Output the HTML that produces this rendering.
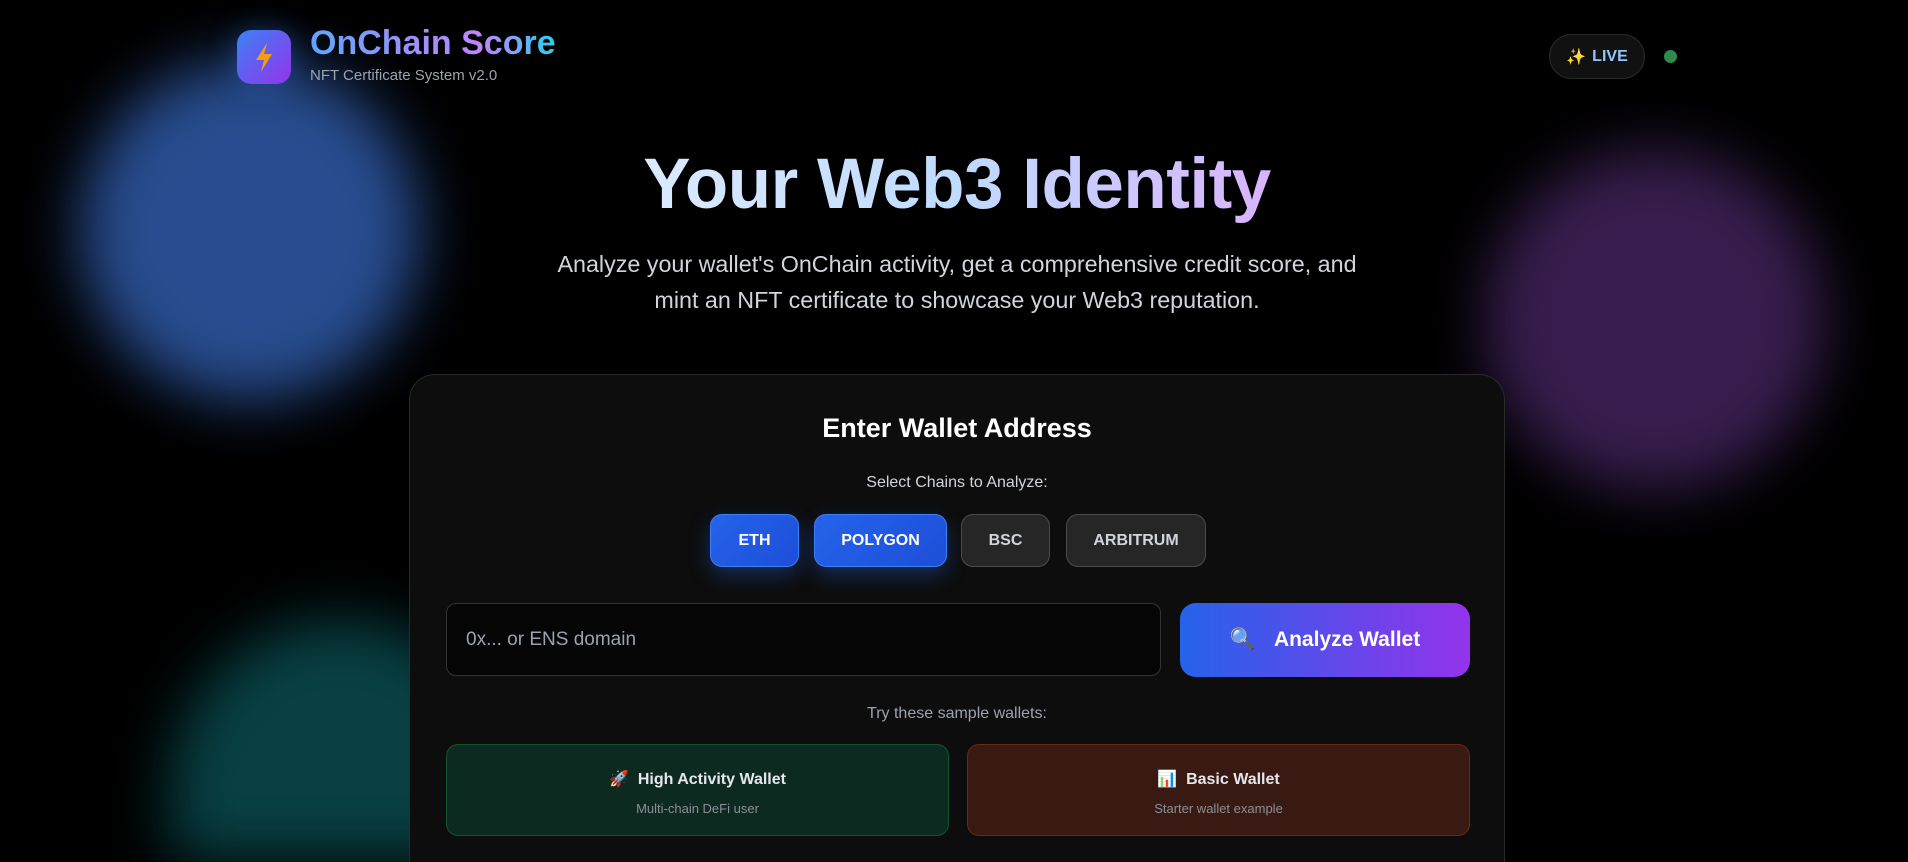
<!DOCTYPE html>
<html style="width:1908px;height:862px;overflow:hidden"><head><meta charset="utf-8"><style>
*{box-sizing:border-box;margin:0;padding:0}
body{width:1908px;height:862px;background:#000;overflow:hidden;position:relative;font-family:"Liberation Sans","Noto Sans CJK SC",sans-serif;color:#fff}
.blob{position:absolute;border-radius:50%;filter:blur(30px)}
.logo{position:absolute;left:237px;top:30px;width:54px;height:54px;border-radius:14px;background:linear-gradient(135deg,#3b82f6,#9333ea);box-shadow:0 0 30px rgba(59,130,246,.35)}
.t1{position:absolute;left:310px;top:24px;font-size:34px;font-weight:700;background:linear-gradient(90deg,#60a5fa,#c084fc 70%,#22d3ee);-webkit-background-clip:text;color:transparent}
.t2{position:absolute;left:310px;top:67px;font-size:15px;color:#9ca3af}
.live{position:absolute;left:1549px;top:34px;width:96px;height:45px;border-radius:23px;background:#111;border:1px solid #2a2a2a;color:#93c5fd;font-weight:700;font-size:16px;display:flex;align-items:center;justify-content:center;gap:6px}
.dot{position:absolute;left:1664px;top:50px;width:13px;height:13px;border-radius:50%;background:#2f8a4f}
h1{position:absolute;left:0;width:1914px;top:144px;text-align:center;font-size:71px;font-weight:700;letter-spacing:-0.5px}
h1 span{background:linear-gradient(90deg,#dbeafe,#bfdbfe 50%,#d8b4fe);-webkit-background-clip:text;color:transparent}
.p{position:absolute;left:0;width:1914px;top:246px;text-align:center;font-size:23.3px;line-height:36px;color:#d1d5db}
.card{position:absolute;left:409px;top:374px;width:1096px;height:488px;border-radius:26px 26px 0 0;background:#0d0d0d;border:1px solid #2a2a2a;border-bottom:none}
.ct{position:absolute;left:0;right:0;top:38px;text-align:center;font-size:27px;font-weight:700}
.sc{position:absolute;left:0;right:0;top:99px;text-align:center;font-size:16px;color:#d1d5db}
.chip{position:absolute;top:139px;height:53px;border-radius:12px;font-size:16px;font-weight:700;display:flex;align-items:center;justify-content:center}
.on{background:linear-gradient(135deg,#2563eb,#1d4ed8);border:1px solid #3b82f6;box-shadow:0 8px 20px rgba(37,99,235,.35)}
.off{background:#262626;border:1px solid #4b4b4b;color:#d1d5db}
.inp{position:absolute;left:36px;top:228px;width:715px;height:73px;border-radius:10px;background:#050505;border:1px solid #333;color:#9ca3af;font-size:19px;padding-left:19px;display:flex;align-items:center}
.btn{position:absolute;left:770px;top:228px;width:290px;height:74px;border-radius:16px;background:linear-gradient(90deg,#2563eb,#9333ea);font-size:21px;font-weight:700;display:flex;align-items:center;justify-content:center;gap:18px}
.try{position:absolute;left:0;right:0;top:330px;text-align:center;font-size:16px;color:#9ca3af}
.sw{position:absolute;top:369px;width:503px;height:92px;border-radius:12px;text-align:center}
.sw b{display:block;margin-top:24px;font-size:16px;color:#e5e7eb}
.sw small{display:block;margin-top:12px;font-size:13px;color:#8b8f96}
</style></head><body>
<div class="blob" style="left:80px;top:60px;width:340px;height:340px;background:#2f5aa8;opacity:.85"></div>
<div class="blob" style="left:1485px;top:150px;width:340px;height:340px;background:#3d2156;opacity:.9"></div>
<div class="blob" style="left:170px;top:620px;width:340px;height:240px;border-radius:170px 170px 0 0;background:#0a4c50;opacity:.85"></div>
<div class="logo"><svg width="54" height="54" viewBox="0 0 54 54"><path d="M30 13 L19 30 H27 L24 42 L35 24 H27 Z" fill="#f59e0b"/></svg></div>
<div class="t1">OnChain Score</div>
<div class="t2">NFT Certificate System v2.0</div>
<div class="live"><span style="color:#fbbf24">✨</span>LIVE</div>
<div class="dot"></div>
<h1><span>Your Web3 Identity</span></h1>
<div class="p">Analyze your wallet's OnChain activity, get a comprehensive credit score, and<br>mint an NFT certificate to showcase your Web3 reputation.</div>
<div class="card">
<div class="ct">Enter Wallet Address</div>
<div class="sc">Select Chains to Analyze:</div>
<div class="chip on" style="left:300px;width:89px">ETH</div>
<div class="chip on" style="left:404px;width:133px">POLYGON</div>
<div class="chip off" style="left:551px;width:89px">BSC</div>
<div class="chip off" style="left:656px;width:140px">ARBITRUM</div>
<div class="inp">0x... or ENS domain</div>
<div class="btn"><span style="color:#67e8f9">🔍</span>Analyze Wallet</div>
<div class="try">Try these sample wallets:</div>
<div class="sw" style="left:36px;background:#0d2a20;border:1px solid #14532d"><b>🚀&nbsp; High Activity Wallet</b><small>Multi-chain DeFi user</small></div>
<div class="sw" style="left:557px;background:#391a12;border:1px solid #6b2a14"><b>📊&nbsp; Basic Wallet</b><small>Starter wallet example</small></div>
</div>
</body></html>
